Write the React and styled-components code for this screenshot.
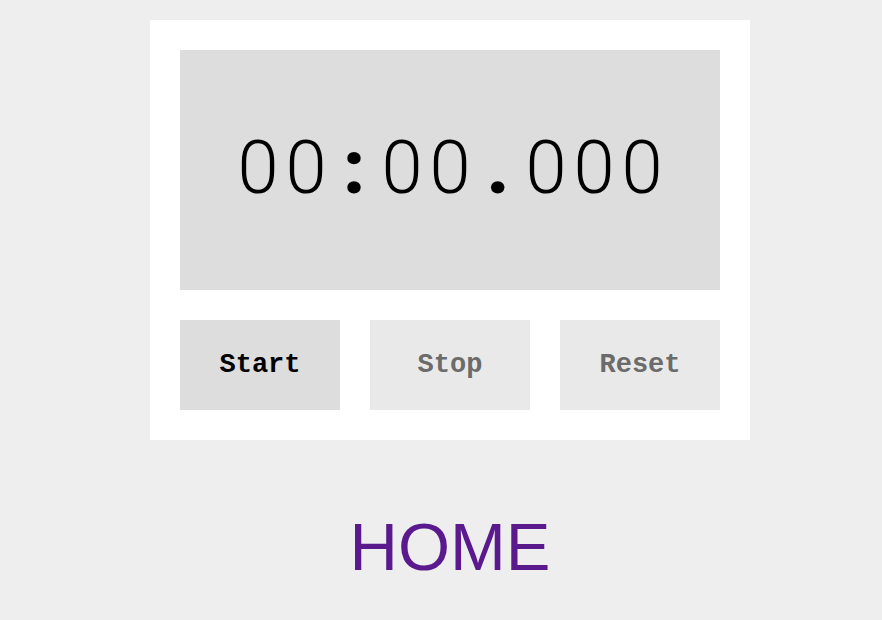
import React from 'react';
import styled, { createGlobalStyle } from 'styled-components';

const GlobalStyle = createGlobalStyle`
  body {
    margin: 0;
    background-color: #eeeeee;
    font-family: "Liberation Sans", Arial, sans-serif;
  }
`;

function App() {
  const time = '00:00.000';

  return (
    <Page>
      <GlobalStyle />
      <Column>
        <Watch>
          <Display>
            {time.split('').map((ch, i) => (
              <Cell key={i} punct={ch === ':' || ch === '.'}>{ch}</Cell>
            ))}
          </Display>
          <Controls>
            <Button active>Start</Button>
            <Button>Stop</Button>
            <Button>Reset</Button>
          </Controls>
        </Watch>
        <Title>HOME</Title>
      </Column>
    </Page>
  );
}

export default App;

const Page = styled.div`
  padding: 20px 0 0 150px;
`;

const Column = styled.div`
  width: 600px;
  display: flex;
  flex-direction: column;
  align-items: center;
`;

const Watch = styled.div`
  width: 600px;
  box-sizing: border-box;
  padding: 30px;
  background-color: #ffffff;
  display: flex;
  flex-direction: column;
  gap: 30px;
`;

const Display = styled.div`
  height: 240px;
  box-sizing: border-box;
  padding-bottom: 5px;
  background-color: #dddddd;
  display: flex;
  align-items: center;
  justify-content: center;
  font-family: Roboto, "Liberation Sans", sans-serif;
  font-weight: 300;
  font-size: 74px;
  color: #000000;
`;

const Cell = styled.span`
  width: 48px;
  text-align: center;
  font-weight: ${p => (p.punct ? 900 : 300)};
`;

const Controls = styled.div`
  display: grid;
  grid-template-columns: repeat(3, 1fr);
  gap: 30px;
`;

const Button = styled.button`
  height: 90px;
  border: none;
  padding: 0;
  background-color: ${p => (p.active ? '#dddddd' : '#e9e9e9')};
  color: ${p => (p.active ? '#000000' : '#6b6b6b')};
  font-family: "Liberation Mono", "Courier New", monospace;
  font-weight: bold;
  font-size: 27px;
  cursor: pointer;
`;

const Title = styled.h1`
  margin: 73px 0 0;
  font-family: "Liberation Sans", Arial, sans-serif;
  font-weight: 400;
  font-size: 67px;
  line-height: 1;
  color: #5a1a8e;
`;
